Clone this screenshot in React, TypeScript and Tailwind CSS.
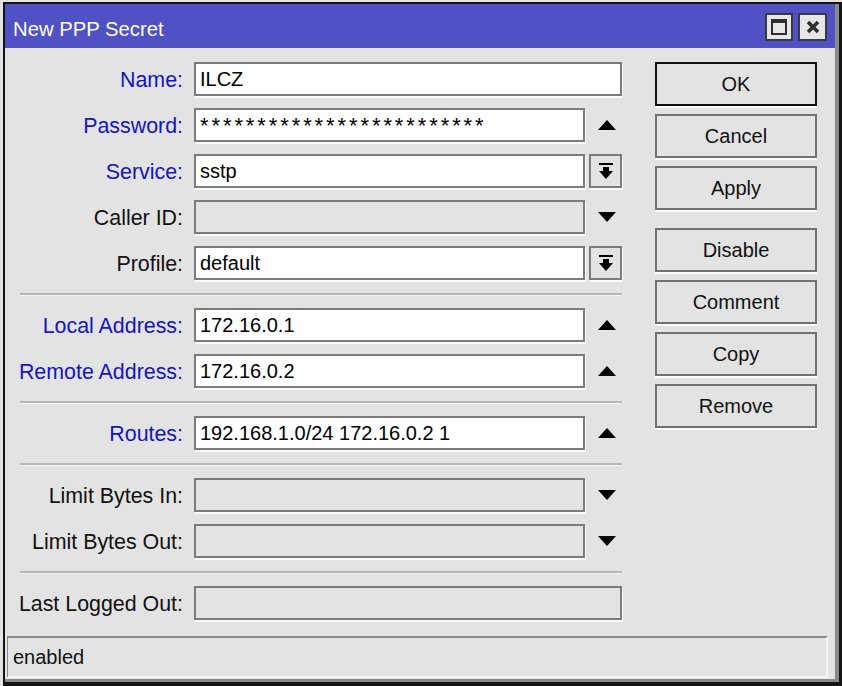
import type { ReactNode } from 'react'

type Side = 'none' | 'up' | 'down' | 'select'

type Row = {
  label: string
  blue?: boolean
  value?: string
  disabled?: boolean
  side: Side
  password?: boolean
}

const groups: Row[][] = [
  [
    { label: 'Name:', blue: true, value: 'ILCZ', side: 'none' },
    { label: 'Password:', blue: true, value: '*************************', side: 'up', password: true },
    { label: 'Service:', blue: true, value: 'sstp', side: 'select' },
    { label: 'Caller ID:', disabled: true, side: 'down' },
    { label: 'Profile:', value: 'default', side: 'select' },
  ],
  [
    { label: 'Local Address:', blue: true, value: '172.16.0.1', side: 'up' },
    { label: 'Remote Address:', blue: true, value: '172.16.0.2', side: 'up' },
  ],
  [{ label: 'Routes:', blue: true, value: '192.168.1.0/24 172.16.0.2 1', side: 'up' }],
  [
    { label: 'Limit Bytes In:', disabled: true, side: 'down' },
    { label: 'Limit Bytes Out:', disabled: true, side: 'down' },
  ],
  [{ label: 'Last Logged Out:', disabled: true, side: 'none' }],
]

function UpArrow() {
  return (
    <svg width="18" height="10" viewBox="0 0 18 10">
      <polygon points="9,0 18,10 0,10" fill="#000" />
    </svg>
  )
}

function DownArrow() {
  return (
    <svg width="18" height="10" viewBox="0 0 18 10">
      <polygon points="0,0 18,0 9,10" fill="#000" />
    </svg>
  )
}

function SelectIcon() {
  return (
    <svg width="14" height="17" viewBox="0 0 14 17">
      <rect x="0" y="0" width="14" height="2" fill="#000" />
      <rect x="4" y="4" width="6" height="4" fill="#000" />
      <polygon points="0,8 14,8 7,16" fill="#000" />
    </svg>
  )
}

function SideBox({ side }: { side: Side }) {
  if (side === 'none') return null
  if (side === 'select')
    return (
      <div className="ml-[4px] flex h-[34px] w-[33px] items-center justify-center border-2 border-[#7c7c7c] bg-[#e3e3e3] shadow-[1px_2px_0_#fbfbfb]">
        <SelectIcon />
      </div>
    )
  return (
    <div className="flex h-[34px] w-[37px] items-center pl-[13px]">
      {side === 'up' ? <UpArrow /> : <DownArrow />}
    </div>
  )
}

function FormRow({ row }: { row: Row }) {
  const full = row.side === 'none'
  return (
    <div className="flex h-[34px] items-center">
      <div
        className={`w-[189px] pr-[11px] pt-[3px] text-right text-[21.4px] leading-none ${row.blue ? 'text-[#1414c6]' : 'text-[#111]'}`}
      >
        {row.label}
      </div>
      <div
        className={`flex h-[34px] items-center border-2 border-[#7c7c7c] pl-[4px] text-[20px] text-black shadow-[1px_2px_0_#fbfbfb] ${full ? 'w-[428px]' : 'w-[391px]'} ${row.disabled ? 'bg-[#e3e3e3]' : 'bg-white'}`}
      >
        <span className={row.password ? 'text-[22px] tracking-[2.9px]' : ''}>{row.value}</span>
      </div>
      <SideBox side={row.side} />
    </div>
  )
}

function Separator() {
  return (
    <div className="flex h-[4px] items-center pl-[15px]">
      <div className="h-[2px] w-[602px] bg-[#b6b6b6] shadow-[0_1px_0_#f6f6f6]" />
    </div>
  )
}

function Button({ children, primary }: { children: ReactNode; primary?: boolean }) {
  return (
    <div
      className={`flex h-[44px] w-[162px] items-center justify-center border-2 bg-[#e3e3e3] text-[20px] text-[#111] shadow-[0_2px_0_#fbfbfb] ${primary ? 'border-[#111]' : 'border-[#727272]'}`}
    >
      {children}
    </div>
  )
}

export default function App() {
  return (
    <div className="h-[686px] w-[842px] overflow-hidden bg-[#e3e3e3] font-['Liberation_Sans',Arial,sans-serif]">
      {/* window frame */}
      <div className="ml-[3px] mt-[2px] h-[684px] w-[839px] border-b-[4px] border-l-2 border-r-[3px] border-t-2 border-[#141414]">
        <div className="flex h-full flex-col border-b-[3px] border-r-[4px] border-[#8a8a8a]">
          {/* title bar */}
          <div className="flex h-[44px] items-center justify-between bg-[#4f51c4] pl-[8px] pr-[8px]">
            <span className="pt-[7px] text-[20.3px] text-white">New PPP Secret</span>
            <div className="flex gap-[5px] pt-[2px]">
              <div className="flex h-[28px] w-[28px] items-center justify-center border-2 border-[#3a3a3a] bg-[#e6e6e6]">
                <svg width="16" height="16" viewBox="0 0 16 16">
                  <rect x="1" y="1" width="14" height="14" fill="none" stroke="#2e2e2e" strokeWidth="2" />
                  <rect x="0" y="0" width="16" height="4" fill="#2e2e2e" />
                </svg>
              </div>
              <div className="flex h-[28px] w-[29px] items-center justify-center border-2 border-[#3a3a3a] bg-[#e6e6e6]">
                <svg width="14" height="14" viewBox="0 0 14 14">
                  <path d="M2 2 L12 12 M12 2 L2 12" stroke="#2e2e2e" strokeWidth="3.6" />
                </svg>
              </div>
            </div>
          </div>

          {/* body */}
          <div className="flex flex-1 pt-[14px]">
            <div className="flex w-[617px] flex-col gap-[12px]">
              {groups.map((g, gi) => (
                <div key={gi} className="contents">
                  {gi > 0 && <Separator />}
                  {g.map((r) => (
                    <FormRow key={r.label} row={r} />
                  ))}
                </div>
              ))}
            </div>
            <div className="ml-[33px] flex flex-col">
              <div className="flex flex-col gap-[8px]">
                <Button primary>OK</Button>
                <Button>Cancel</Button>
                <Button>Apply</Button>
              </div>
              <div className="mt-[18px] flex flex-col gap-[8px]">
                <Button>Disable</Button>
                <Button>Comment</Button>
                <Button>Copy</Button>
                <Button>Remove</Button>
              </div>
            </div>
          </div>

          {/* status bar */}
          <div className="mb-[1px] ml-[2px] mr-[7px] flex h-[42px] items-center border-b-2 border-l border-r-2 border-t-2 border-b-[#f6f6f6] border-l-[#8a8a8a] border-r-[#f6f6f6] border-t-[#8a8a8a] pl-[5px] text-[20px] text-[#111]">
            enabled
          </div>
        </div>
      </div>
    </div>
  )
}
